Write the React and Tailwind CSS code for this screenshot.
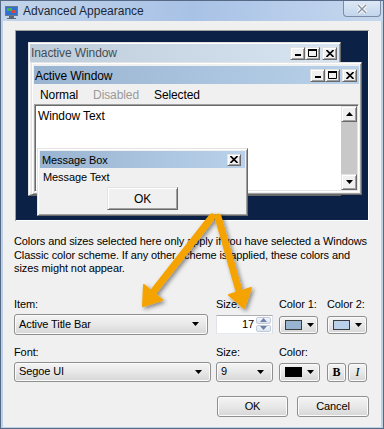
import React from "react";

const font = "font-['Liberation_Sans',Arial,sans-serif]";
const raised =
  "border border-t-[#e3e3e3] border-l-[#e3e3e3] border-r-[#696969] border-b-[#696969] shadow-[inset_1px_1px_#ffffff,inset_-1px_-1px_#a0a0a0]";
const sunken =
  "border border-t-[#a0a0a0] border-l-[#a0a0a0] border-r-white border-b-white shadow-[inset_1px_1px_#696969,inset_-1px_-1px_#e3e3e3]";
const aeroBtn =
  "rounded-[3px] border border-[#8e8f8f] bg-linear-to-b from-[#f4f4f4] via-[#e8e8e8] to-[#d6d6d6] shadow-[inset_0_0_0_1px_#fbfbfb]";

function Caret() {
  return (
    <svg width="7" height="4" viewBox="0 0 7 4">
      <path d="M0 0h7L3.5 4z" fill="#000" />
    </svg>
  );
}

function CapBtn({ kind, className = "" }) {
  return (
    <div className={`flex h-[13px] w-[15px] items-center justify-center bg-[#f0f0f0] ${raised} ${className}`}>
      {kind === "min" && (
        <svg width="8" height="8" viewBox="0 0 8 8">
          <rect x="1" y="5" width="6" height="2" fill="#000" />
        </svg>
      )}
      {kind === "max" && (
        <svg width="9" height="8" viewBox="0 0 9 8">
          <path d="M0.5 0.5h8v7h-8z" fill="none" stroke="#000" />
          <rect x="0" y="0" width="9" height="2" fill="#000" />
        </svg>
      )}
      {kind === "close" && (
        <svg width="8" height="7" viewBox="0 0 8 7">
          <path d="M0.5 0l7 7M7.5 0l-7 7" stroke="#000" strokeWidth="1.6" />
        </svg>
      )}
    </div>
  );
}

function CapButtons() {
  return (
    <div className="flex items-center">
      <CapBtn kind="min" />
      <CapBtn kind="max" />
      <CapBtn kind="close" className="ml-[2px]" />
    </div>
  );
}

function ScrollBtn({ up }) {
  return (
    <div className={`flex h-[16px] w-[16px] items-center justify-center bg-[#f0f0f0] ${raised}`}>
      <svg width="7" height="4" viewBox="0 0 7 4">
        <path d={up ? "M0 4h7L3.5 0z" : "M0 0h7L3.5 4z"} fill="#000" />
      </svg>
    </div>
  );
}

function Preview() {
  return (
    <div className="relative mx-[12px] mt-[9px] h-[191px] bg-[#0b2246] shadow-[inset_1px_1px_#a0a0a0,inset_-1px_-1px_#ffffff]">
      {/* inactive window */}
      <div className={`absolute left-[13px] top-[12px] h-[154px] w-[313px] bg-[#f0f0f0] p-[1px] ${raised}`}>
        <div className="flex h-[18px] items-center justify-between bg-linear-to-r from-[#bfcddb] to-[#d7e4f2] pl-[1px] pr-[2px] text-[12px] text-[#434e54]">
          <span>Inactive Window</span>
          <CapButtons />
        </div>
      </div>

      {/* active window */}
      <div className={`absolute left-[16px] top-[32px] flex h-[133px] w-[331px] flex-col bg-[#f0f0f0] p-[2px] ${raised}`}>
        <div className="mt-[1px] flex h-[18px] items-center justify-between bg-linear-to-r from-[#99b4d1] to-[#b9d1ea] pl-[1px] pr-[2px] text-[12px] text-black">
          <span className="pt-[1px]">Active Window</span>
          <CapButtons />
        </div>
        <div className="flex h-[20px] items-center gap-[15px] pl-[6px] pt-[1px] text-[12px] text-black">
          <span>Normal</span>
          <span className="text-[#9a9a9a]">Disabled</span>
          <span>Selected</span>
        </div>
        <div className={`flex flex-1 bg-white p-[1px] ${sunken}`}>
          <div className="flex-1 pl-[2px] pt-[3px] text-[12px] leading-[15px] text-black">Window Text</div>
          <div className="flex w-[16px] flex-col bg-[#c8c8c8]">
            <ScrollBtn up />
            <div className="flex-1" />
            <ScrollBtn />
          </div>
        </div>
      </div>

      {/* message box */}
      <div className={`absolute left-[22px] top-[118px] flex h-[68px] w-[211px] flex-col bg-[#f0f0f0] p-[2px] ${raised}`}>
        <div className="flex h-[17px] items-center justify-between bg-linear-to-r from-[#99b4d1] to-[#b9d1ea] pl-[2px] pr-[4px] text-[11px] text-black">
          <span className="pt-[1px]">Message Box</span>
          <div className={`flex h-[12px] w-[14px] items-center justify-center bg-[#f0f0f0] ${raised}`}>
            <svg width="8" height="7" viewBox="0 0 8 7">
              <path d="M0.5 0l7 7M7.5 0l-7 7" stroke="#000" strokeWidth="1.6" />
            </svg>
          </div>
        </div>
        <div className="flex h-[18px] items-center pl-[3px] pt-[1px] text-[11px] text-black">Message Text</div>
        <div className="mt-[1px] flex justify-center">
          <div className={`flex h-[23px] w-[71px] items-center justify-center bg-[#f0f0f0] text-[12px] text-black ${raised}`}>
            OK
          </div>
        </div>
      </div>
    </div>
  );
}

function Select({ text, w }) {
  return (
    <div className={`flex h-full items-center justify-between pl-[4px] pr-[8px] text-[11px] ${aeroBtn} ${w}`}>
      <span>{text}</span>
      <Caret />
    </div>
  );
}

function ColorBtn({ swatch }) {
  return (
    <div className={`flex h-full w-full items-center gap-[5px] pl-[5px] ${aeroBtn}`}>
      <div className={`h-[10px] w-[17px] border border-[#3c3c3c] ${swatch}`} />
      <Caret />
    </div>
  );
}

function Arrows() {
  const shaft = "#f5a300";
  return (
    <svg className="pointer-events-none absolute left-0 top-0" width="384" height="429" viewBox="0 0 384 429">
      <defs>
        <filter id="sh" x="-20%" y="-20%" width="140%" height="140%">
          <feDropShadow dx="2" dy="2" stdDeviation="2" floodColor="#000" floodOpacity="0.45" />
        </filter>
      </defs>
      <g filter="url(#sh)">
        <path d="M211 216L153 290" stroke={shaft} strokeWidth="7" strokeLinecap="round" />
        <path d="M142 305L161 299L143 284z" fill={shaft} stroke={shaft} strokeWidth="2" strokeLinejoin="round" />
        <path d="M217 216L238 290" stroke={shaft} strokeWidth="7" strokeLinecap="round" />
        <path d="M243 307L250 287L228 294z" fill={shaft} stroke={shaft} strokeWidth="2" strokeLinejoin="round" />
      </g>
    </svg>
  );
}

export default function App() {
  return (
    <div className={`relative flex h-[429px] w-[384px] flex-col border border-[#566a86] bg-[#bcd0e8] px-[2px] pb-[1px] text-black ${font}`}>
      {/* title bar */}
      <div className="-mx-[2px] flex h-[20px] items-start bg-linear-to-r from-[#c3d4ea] via-[#a8c2e6] to-[#c6d8ee] pl-[3px]">
        <svg className="mt-[3px]" width="16" height="16" viewBox="0 0 16 16">
          <rect x="1" y="2" width="13" height="10" fill="#6a7a8c" />
          <rect x="2" y="3" width="11" height="8" fill="#2f6fd0" />
          <rect x="3" y="4" width="5" height="3" fill="#46b24a" />
          <rect x="8" y="6" width="4" height="3" fill="#d24a3a" />
          <rect x="5" y="12" width="5" height="2" fill="#5b6775" />
          <rect x="3" y="14" width="9" height="1" fill="#5b6775" />
        </svg>
        <span className="ml-[3px] mt-[3px] text-[12px] leading-[14px] text-[#1b2838]">Advanced Appearance</span>
        <div className="ml-auto mr-[2px] flex h-[16px] w-[38px] items-center justify-center rounded-b-[4px] border border-t-0 border-[#7a8ca6] bg-linear-to-b from-[#dde8f5] to-[#c3d5ec]">
          <svg width="12" height="10" viewBox="0 0 12 10">
            <path d="M2 1l8 8M10 1l-8 8" stroke="#ffffff" strokeWidth="3.4" />
            <path d="M2 1l8 8M10 1l-8 8" stroke="#8a96a6" strokeWidth="1.6" />
          </svg>
        </div>
      </div>

      {/* client area */}
      <div className="flex flex-1 flex-col bg-[#f0f0f0] text-[11px] tracking-[-0.1px]">
        <Preview />

        <p className="ml-[11px] mt-[14px] text-[11px] leading-[13.5px]">
          Colors and sizes selected here only apply if you have selected a Windows
          <br />
          Classic color scheme. If any other scheme is applied, these colors and
          <br />
          sizes might not appear.
        </p>

        {/* row 1 */}
        <div className="ml-[11px] mt-[22px] flex">
          <div className="flex w-[194px] flex-col">
            <span className="h-[13px] leading-[13px]">Item:</span>
            <div className="mt-[3px] h-[21px]">
              <Select text="Active Title Bar" w="w-[194px]" />
            </div>
          </div>
          <div className="ml-[8px] flex w-[57px] flex-col">
            <span className="h-[13px] leading-[13px]">Size:</span>
            <div className="mt-[4px] flex h-[19px] items-stretch border border-[#abadb3] border-b-[#e3e9ef] border-l-[#e2e3ea] border-r-[#dbdfe6] bg-white">
              <span className="flex flex-1 items-center justify-end pr-[2px] text-[11px]">17</span>
              <div className="flex w-[16px] flex-col gap-[1px] py-[1px] pr-[1px]">
                <div className="flex flex-1 items-center justify-center rounded-[2px] border border-[#c2cbd9] bg-linear-to-b from-[#f4f7fb] to-[#dde5ef]">
                  <svg width="7" height="4" viewBox="0 0 7 4">
                    <path d="M0 4h7L3.5 0z" fill="#6d82a6" />
                  </svg>
                </div>
                <div className="flex flex-1 items-center justify-center rounded-[2px] border border-[#c2cbd9] bg-linear-to-b from-[#f4f7fb] to-[#dde5ef]">
                  <svg width="7" height="4" viewBox="0 0 7 4">
                    <path d="M0 0h7L3.5 4z" fill="#6d82a6" />
                  </svg>
                </div>
              </div>
            </div>
          </div>
          <div className="ml-[6px] flex w-[39px] flex-col">
            <span className="h-[13px] leading-[13px]">Color 1:</span>
            <div className="mt-[5px] h-[18px]">
              <ColorBtn swatch="bg-[#99b4d1]" />
            </div>
          </div>
          <div className="ml-[9px] flex w-[40px] flex-col">
            <span className="h-[13px] leading-[13px]">Color 2:</span>
            <div className="mt-[5px] h-[18px]">
              <ColorBtn swatch="bg-[#b9d1ea]" />
            </div>
          </div>
        </div>

        {/* row 2 */}
        <div className="ml-[11px] mt-[11px] flex">
          <div className="flex w-[197px] flex-col">
            <span className="h-[13px] leading-[13px]">Font:</span>
            <div className="mt-[3px] h-[20px]">
              <Select text="Segoe UI" w="w-[197px]" />
            </div>
          </div>
          <div className="ml-[5px] flex w-[57px] flex-col">
            <span className="h-[13px] leading-[13px]">Size:</span>
            <div className="mt-[3px] h-[20px]">
              <Select text="9" w="w-[57px]" />
            </div>
          </div>
          <div className="ml-[6px] flex w-[41px] flex-col">
            <span className="h-[13px] leading-[13px]">Color:</span>
            <div className="mt-[4px] h-[19px]">
              <div className={`flex h-full w-full items-center gap-[5px] pl-[5px] ${aeroBtn}`}>
                <div className="h-[10px] w-[17px] bg-black" />
                <Caret />
              </div>
            </div>
          </div>
          <div className="ml-[7px] mt-[17px] flex h-[19px] gap-[2px]">
            <div className={`flex w-[19px] items-center justify-center font-['Liberation_Serif',serif] text-[12px] font-bold ${aeroBtn}`}>
              B
            </div>
            <div className={`flex w-[19px] items-center justify-center font-['Liberation_Serif',serif] text-[12px] italic ${aeroBtn}`}>
              I
            </div>
          </div>
        </div>

        {/* buttons */}
        <div className="mr-[12px] mt-[14px] flex justify-end gap-[9px]">
          <div className={`flex h-[21px] w-[71px] items-center justify-center ${aeroBtn}`}>OK</div>
          <div className={`flex h-[21px] w-[72px] items-center justify-center ${aeroBtn}`}>Cancel</div>
        </div>
      </div>

      <Arrows />
    </div>
  );
}
